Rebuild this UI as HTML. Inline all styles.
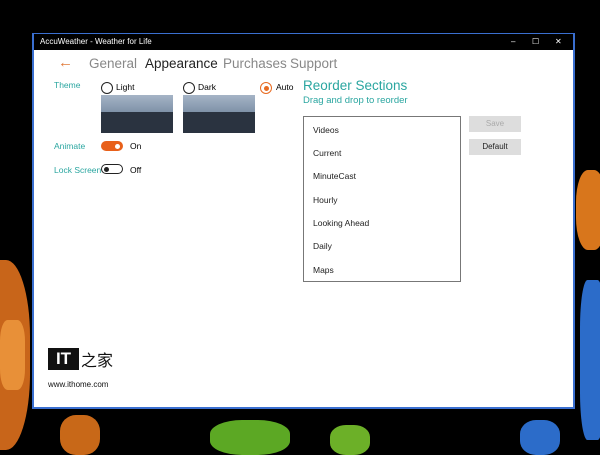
<!DOCTYPE html>
<html><head><style>
body{margin:0;width:600px;height:449px;overflow:hidden;background:#000;position:relative;font-family:"Liberation Sans",sans-serif;}
.bg{position:absolute;}
.win{position:absolute;left:32px;top:33px;width:539px;height:373px;border:2px solid #3a6fd0;border-top:1px solid #3a6fd0;background:#fff;}
.title{position:absolute;left:0;top:0;width:539px;height:16px;background:#000;color:#fff;font-size:8px;line-height:16px;}
.t{position:absolute;white-space:nowrap;}
.teal{color:#2aa6a0;}
.radio{position:absolute;width:10px;height:10px;border:1px solid #222;border-radius:50%;}
.thumb{position:absolute;width:72px;height:38px;background:linear-gradient(#a5b4c6 0,#7f92a8 45%,#2a3340 45%);}
.tog{position:absolute;width:22px;height:10px;border-radius:6px;}
.list{position:absolute;left:269px;top:82px;width:156px;height:164px;border:1.5px solid #777;}
.li{position:absolute;left:9px;font-size:8.5px;color:#222;}
.btn{position:absolute;left:435px;width:52px;height:16px;background:#ddd;font-size:8px;text-align:center;line-height:16px;}
</style></head><body>
<div class="bg" style="left:-30px;top:260px;width:60px;height:190px;background:#c8651a;border-radius:40%;"></div>
<div class="bg" style="left:0;top:320px;width:25px;height:70px;background:#e89038;border-radius:30%;"></div>
<div class="bg" style="left:576px;top:170px;width:30px;height:80px;background:#d8761c;border-radius:40%;"></div>
<div class="bg" style="left:580px;top:280px;width:25px;height:160px;background:#2c6cc9;border-radius:30%;"></div>
<div class="bg" style="left:210px;top:420px;width:80px;height:35px;background:#5ca824;border-radius:40%;"></div>
<div class="bg" style="left:330px;top:425px;width:40px;height:30px;background:#6cb028;border-radius:40%;"></div>
<div class="bg" style="left:60px;top:415px;width:40px;height:40px;background:#c86818;border-radius:40%;"></div>
<div class="bg" style="left:520px;top:420px;width:40px;height:35px;background:#2c6cc9;border-radius:40%;"></div>
<div class="win">
<div class="title"><span style="margin-left:6px">AccuWeather - Weather for Life</span>
<span class="t" style="left:477px;top:0">–</span><span class="t" style="left:498px;top:0">☐</span><span class="t" style="left:521px;top:0">✕</span></div>
<div class="t" style="left:24px;top:20px;color:#e07a3a;font-size:15px;">←</div>
<div class="t" style="left:55px;top:22px;font-size:13.5px;color:#888;">General</div>
<div class="t" style="left:111px;top:22px;font-size:13.5px;color:#222;">Appearance</div>
<div class="t" style="left:189px;top:22px;font-size:13.5px;color:#888;">Purchases</div>
<div class="t" style="left:256px;top:22px;font-size:13.5px;color:#888;">Support</div>
<div class="t teal" style="left:20px;top:46px;font-size:8.5px;">Theme</div>
<div class="radio" style="left:67px;top:48px;"></div><div class="t" style="left:82px;top:48px;font-size:8.5px;">Light</div>
<div class="radio" style="left:149px;top:48px;"></div><div class="t" style="left:164px;top:48px;font-size:8.5px;">Dark</div>
<div class="radio" style="left:226px;top:48px;border-color:#e86a20;"><div style="position:absolute;left:2.5px;top:2.5px;width:5px;height:5px;border-radius:50%;background:#e86a20"></div></div><div class="t" style="left:242px;top:48px;font-size:8.5px;">Auto</div>
<div class="thumb" style="left:67px;top:61px;"></div>
<div class="thumb" style="left:149px;top:61px;"></div>
<div class="t teal" style="left:20px;top:107px;font-size:8.5px;">Animate</div>
<div class="tog" style="left:67px;top:107px;background:#e8601a;"><div style="position:absolute;right:3px;top:2.5px;width:5px;height:5px;border-radius:50%;background:#fff"></div></div>
<div class="t" style="left:96px;top:107px;font-size:8.5px;">On</div>
<div class="t teal" style="left:20px;top:131px;font-size:8.5px;">Lock Screen</div>
<div class="tog" style="left:67px;top:130px;border:1.5px solid #222;width:20px;height:8px;"><div style="position:absolute;left:2px;top:1.5px;width:5px;height:5px;border-radius:50%;background:#222"></div></div>
<div class="t" style="left:96px;top:131px;font-size:8.5px;">Off</div>
<div class="t teal" style="left:269px;top:44px;font-size:13.5px;">Reorder Sections</div>
<div class="t teal" style="left:269px;top:61px;font-size:9.5px;">Drag and drop to reorder</div>
<div class="list">
<div class="li" style="top:8px">Videos</div><div class="li" style="top:31px">Current</div><div class="li" style="top:54px">MinuteCast</div><div class="li" style="top:78px">Hourly</div><div class="li" style="top:101px">Looking Ahead</div><div class="li" style="top:124px">Daily</div><div class="li" style="top:148px">Maps</div>
</div>
<div class="btn" style="top:82px;color:#aaa;">Save</div>
<div class="btn" style="top:105px;color:#222;">Default</div>
<div class="t" style="left:14px;top:314px;width:31px;height:22px;background:#111;color:#fff;font-weight:bold;font-size:17px;line-height:22px;text-align:center;">IT</div>
<div class="t" style="left:47px;top:313px;font-size:16px;color:#111;font-family:'Noto Sans CJK SC',sans-serif;">之家</div>
<div class="t" style="left:14px;top:346px;font-size:8px;color:#111;">www.ithome.com</div>
</div>
</body></html>
